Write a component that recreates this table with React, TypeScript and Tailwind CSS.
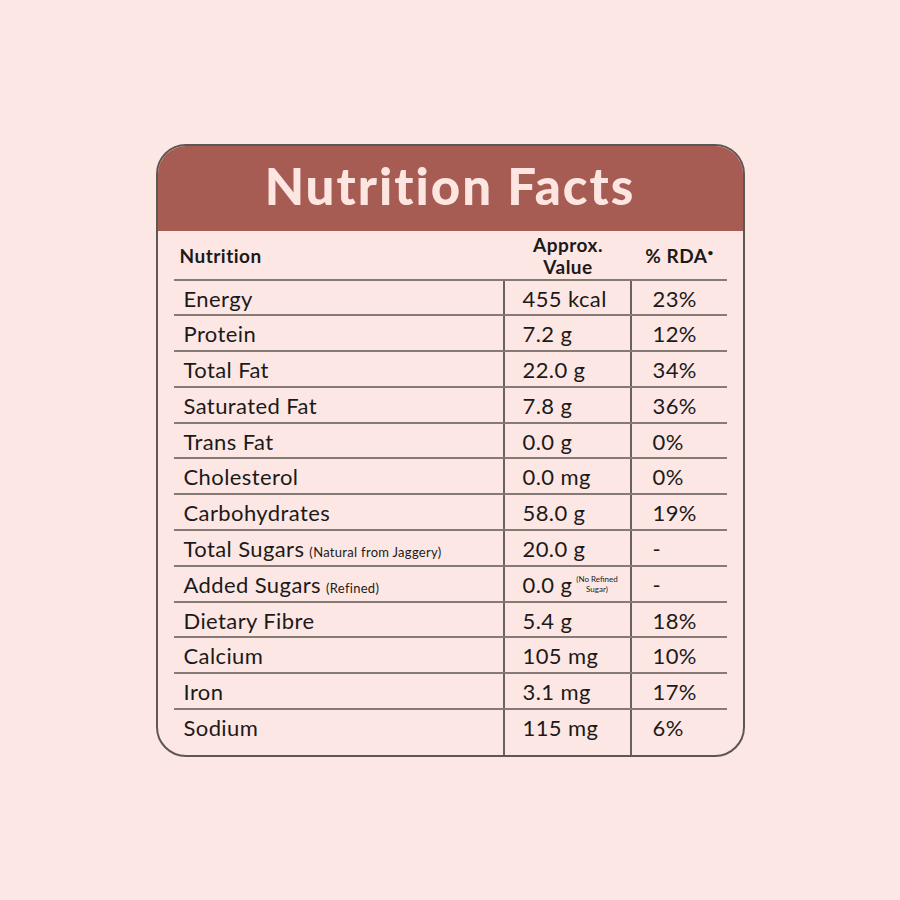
import React from 'react'

interface Row {
  name: string
  note?: string
  value: string
  valueNote?: boolean
  rda: string
}

const rows: Row[] = [
  { name: 'Energy', value: '455 kcal', rda: '23%' },
  { name: 'Protein', value: '7.2 g', rda: '12%' },
  { name: 'Total Fat', value: '22.0 g', rda: '34%' },
  { name: 'Saturated Fat', value: '7.8 g', rda: '36%' },
  { name: 'Trans Fat', value: '0.0 g', rda: '0%' },
  { name: 'Cholesterol', value: '0.0 mg', rda: '0%' },
  { name: 'Carbohydrates', value: '58.0 g', rda: '19%' },
  { name: 'Total Sugars', note: '(Natural from Jaggery)', value: '20.0 g', rda: '-' },
  { name: 'Added Sugars', note: '(Refined)', value: '0.0 g', valueNote: true, rda: '-' },
  { name: 'Dietary Fibre', value: '5.4 g', rda: '18%' },
  { name: 'Calcium', value: '105 mg', rda: '10%' },
  { name: 'Iron', value: '3.1 mg', rda: '17%' },
  { name: 'Sodium', value: '115 mg', rda: '6%' },
]

export default function App() {
  return (
    <main
      className="h-[900px] w-[900px] bg-[#fde7e4] flex items-center justify-center text-[#1c1a19]"
      style={{ fontFamily: 'Lato, "Noto Sans", sans-serif' }}
    >
      <div className="w-[589px] h-[613px] rounded-[30px] border-2 border-[#5d5754] bg-[#fde7e4] overflow-hidden flex flex-col">
        {/* Header */}
        <div className="h-[85px] bg-[#a65b53] flex items-center justify-center shrink-0">
          <h1 className="text-[51px] font-black tracking-[2px] text-[#fde6e1] leading-none -mt-[6px]">Nutrition Facts</h1>
        </div>

        {/* Table */}
        <div className="px-[16px] flex-1 flex flex-col">
          <div className="grid grid-cols-[329px_127px_96px] h-[48px] items-center font-bold tracking-[0.5px] pt-[3px]">
            <div className="pl-[6px] text-[19px]">Nutrition</div>
            <div className="text-center text-[19px] leading-[22px] pl-[4px]">
              Approx.
              <br />
              Value
            </div>
            <div className="text-center text-[19px] pl-[4px]">
              % RDA<sup className="text-[10px] -top-[7px]">•</sup>
            </div>
          </div>

          <div className="flex-1 flex flex-col">
            {rows.map((r, i) => {
              const last = i === rows.length - 1
              return (
                <div
                  key={r.name}
                  className={`grid grid-cols-[329px_127px_96px] border-t-2 border-[#857a75] text-[22px] tracking-[0.4px] ${last ? 'flex-1' : 'h-[35.8px]'}`}
                >
                  <div className="pl-[10px] flex items-baseline leading-[35px]">
                    <span>{r.name}</span>
                    {r.note && <span className="text-[13px] tracking-[0.3px] ml-[5px]">{r.note}</span>}
                  </div>
                  <div className="border-l-2 border-[#6b625e] pl-[18px] flex items-baseline leading-[35px]">
                    <span>{r.value}</span>
                    {r.valueNote && (
                      <span className="text-[8px] tracking-normal leading-[10px] text-center ml-[4px] self-start mt-[7px]">
                        (No Refined
                        <br />
                        Sugar)
                      </span>
                    )}
                  </div>
                  <div className="border-l-2 border-[#6b625e] pl-[21px] leading-[35px]">{r.rda}</div>
                </div>
              )
            })}
          </div>
        </div>
      </div>
    </main>
  )
}
